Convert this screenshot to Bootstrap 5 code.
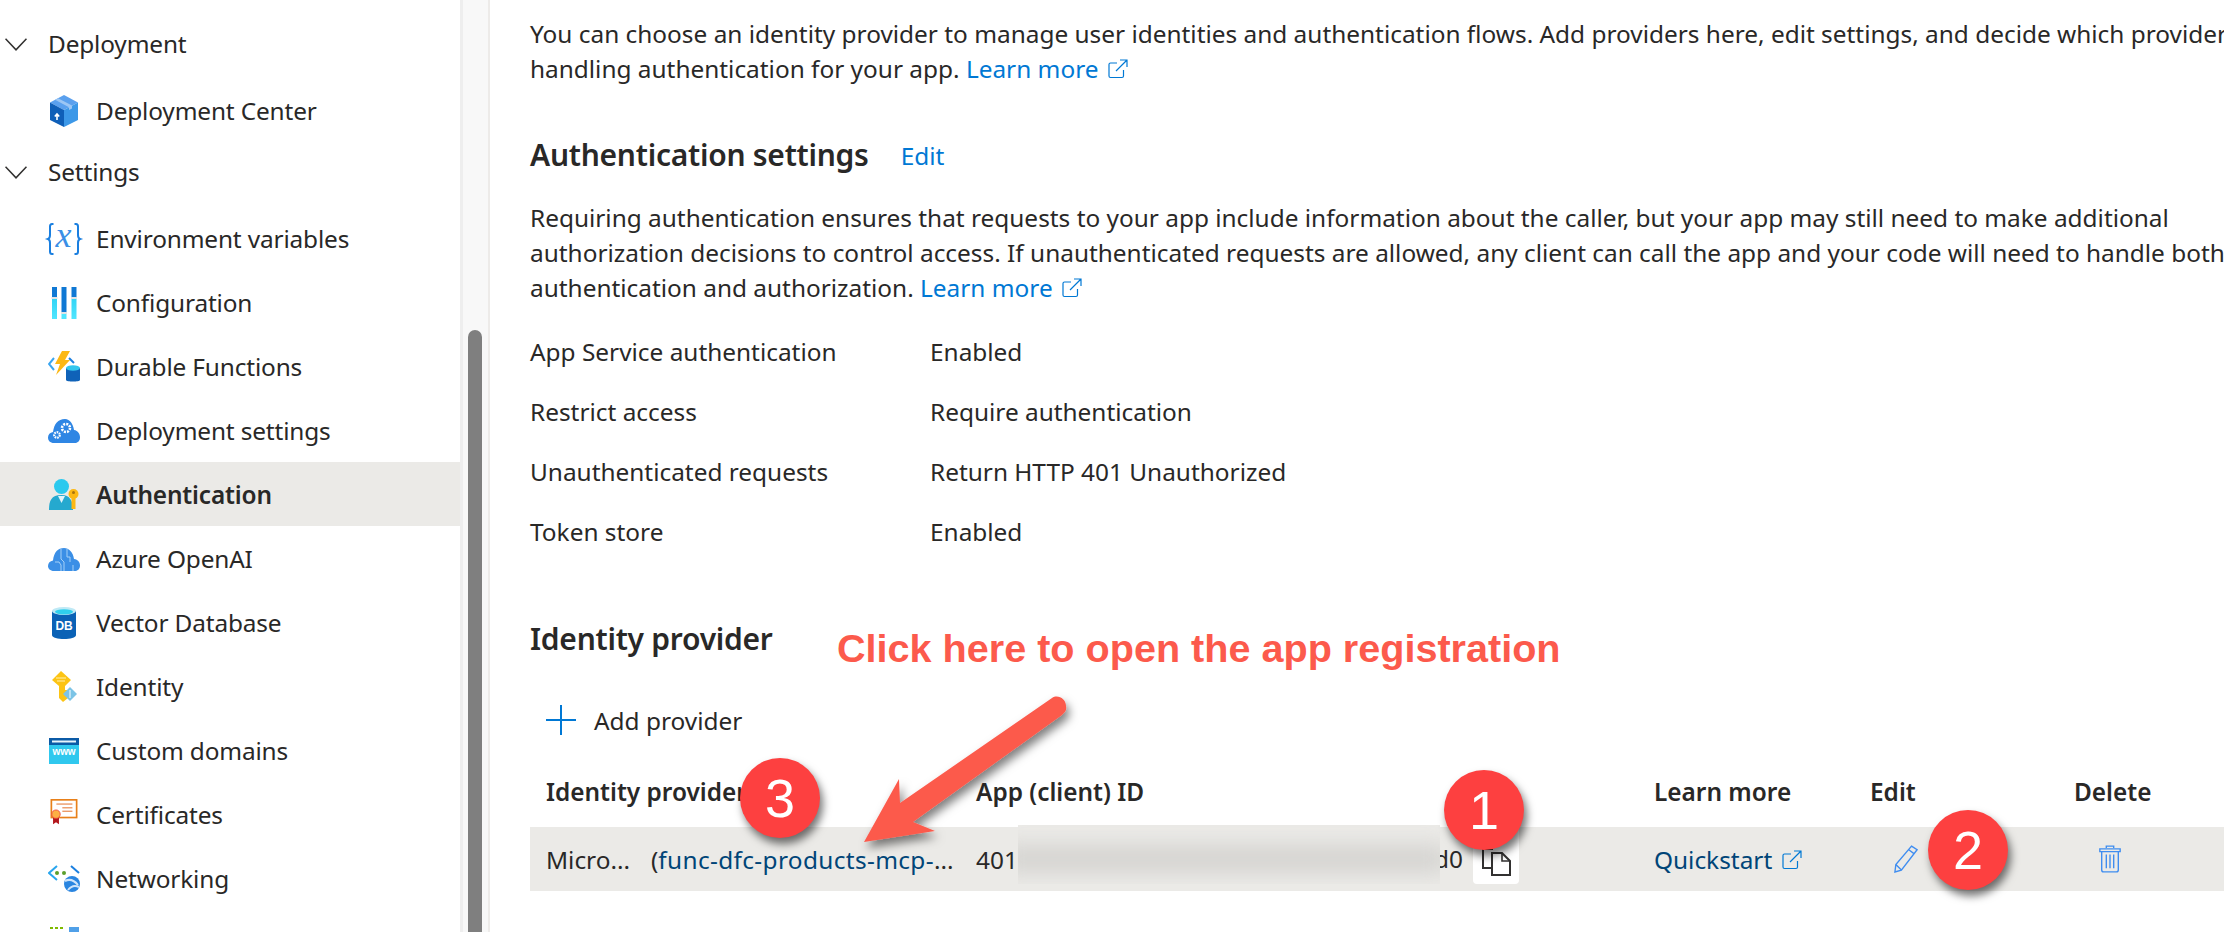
<!DOCTYPE html>
<html lang="en"><head><meta charset="utf-8"><title>Authentication</title>
<link href="https://cdn.jsdelivr.net/npm/bootstrap@5.3.0/dist/css/bootstrap.min.css" rel="stylesheet">
<style>
html,body{height:932px;overflow:hidden;background:#fff}
body{font-family:"Noto Sans","Liberation Sans",sans-serif;font-size:24.4px;color:#292827;position:relative}
.shell{height:932px}
.side{width:460px;flex:none;padding-top:15px;overflow:hidden;letter-spacing:-.15px}
.grp{height:58px;margin-bottom:6px;gap:21px;padding-left:5px}
.grp svg{width:22px;height:13px;flex:none}
.itm{height:64px;padding-left:48px;gap:16px;color:#292827}
.itm svg{width:32px;height:32px;flex:none}
.itm.on{background:#ebeae7;font-weight:600;margin-top:-1px;margin-bottom:1px;padding-top:2px}
.rail{width:30px;flex:none;background:#f8f8f8;border-left:3px solid #eeeeee;border-right:2px solid #edebe9;padding:330px 6px 0 5px}
.thumbx{height:620px;background:#7f7f7f;border-radius:7px 7px 0 0}
.mainx{padding:16px 0 0 40px;line-height:35px;white-space:nowrap;overflow:hidden;min-width:0}
.mainx a{text-decoration:none;color:#0078d4}
.para{margin:0}
.ext{width:20px;height:20px;vertical-align:-1px;margin-left:3px}
.hd{font-size:30px;font-weight:600;letter-spacing:-.26px;line-height:40px}
.hd1{margin-top:49px;gap:32px;margin-bottom:25px}
.hd1 a{font-weight:400;font-size:24.4px;letter-spacing:0;position:relative;top:1px}
.kv{height:60px;margin:0}
.kv1{margin-top:16px}
.kk{width:400px;flex:none}
.hd2{margin-top:58px}
.addp{height:60px;margin-top:31px;margin-left:16px;gap:18px}
.addp svg{width:30px;height:30px}
.thr{font-weight:600;height:40px;margin-top:21px;padding-left:16px;margin-bottom:16px}
.trw{height:64px;background:#ebeae7;padding-left:16px;position:relative}
.c1{width:430px;flex:none}.c2{width:678px;flex:none}.c3{width:216px;flex:none}.c4{width:204px;flex:none}
.c1 a{color:#004578!important;letter-spacing:.35px}
.nm{display:inline-block;width:105px}
.mainx .dk{color:#004578}
.blurx{position:absolute;left:488px;top:-2px;width:422px;height:59px;background:#ecebe8;overflow:hidden}
.blurx i{display:block;position:absolute;left:-20px;right:-10px;top:22px;height:24px;background:#d0cfcc;filter:blur(12px)}
.copyb{position:absolute;left:943px;top:0;width:46px;height:57px;background:#fff;border-radius:0 0 4px 4px;display:flex;align-items:center;justify-content:center}
.copyb svg{width:29px;height:32px;position:relative;top:4px}
.dval{position:absolute;left:904px;top:14px}
.ico2{display:block;width:24px;height:28px;margin-left:24px}
.ann{position:absolute;font-family:"Liberation Sans",Arial,sans-serif;letter-spacing:0}
.cap{left:837px;top:625px;font-size:39.6px;font-weight:700;color:#fc5a4c;line-height:46px;white-space:nowrap}
.dot{width:80px;height:80px;border-radius:50%;background:#fd4040;color:#fff;font-size:54px;line-height:80px;text-align:center;box-shadow:3px 6px 9px rgba(0,0,0,.55)}
.d1{left:1444px;top:770px}.d2{left:1928px;top:810px}.d3{left:740px;top:758px}
.arw{position:absolute;left:0;top:0;width:2224px;height:932px;pointer-events:none}
</style></head><body>
<div class="d-flex shell">
<nav class="side">
<div class="grp d-flex align-items-center"><svg viewBox="0 0 22 13"><path d="M.5.7 11 11.8 21.5.7" fill="none" stroke="#323130" stroke-width="1.6"/></svg><span>Deployment</span></div>
<div class="itm d-flex align-items-center"><svg viewBox="0 0 32 32"><path d="M16 0 30 7.5 16 15 2 7.5Z" fill="#5aa0ee"/><path d="M2 7.5 16 15V32L2 25Z" fill="#0f5fb8"/><path d="M30 7.5 16 15V32L30 25Z" fill="#3c98e8"/><path d="M7 4.8 21 12.2V15L24 13.5V10.6L10 3.2Z" fill="#9cc6f4"/><path d="M9 25V19.5M6.8 21.5 9 19 11.2 21.5" stroke="#fff" stroke-width="1.6" fill="none"/></svg><span>Deployment Center</span></div>
<div class="grp d-flex align-items-center"><svg viewBox="0 0 22 13"><path d="M.5.7 11 11.8 21.5.7" fill="none" stroke="#323130" stroke-width="1.6"/></svg><span>Settings</span></div>
<div class="itm d-flex align-items-center"><svg viewBox="0 0 32 32" overflow="visible"><path d="M5.5 1H4C2.5 1 2 2 2 3.500V12C2 14 1.500 15.500 0 16 1.500 16.500 2 18 2 20V28.500C2 30 2.500 31 4 31H5.500M26.500 1H28C29.500 1 30 2 30 3.500V12C30 14 30.500 15.500 32 16 30.500 16.500 30 18 30 20V28.500C30 30 29.500 31 28 31H26.500" fill="none" stroke="#1a7fe0" stroke-width="2"/><text x="15.500" y="24" text-anchor="middle" font-family="Liberation Serif,serif" font-style="italic" font-size="36" fill="#3a8fe6">x</text></svg><span>Environment variables</span></div>
<div class="itm d-flex align-items-center"><svg viewBox="0 0 32 32"><defs><linearGradient id="g1" x1="0" y1="0" x2="0" y2="1"><stop offset=".3" stop-color="#0f78d4"/><stop offset=".35" stop-color="#32d4f5"/><stop offset="1" stop-color="#50e6ff"/></linearGradient><linearGradient id="g2" x1="0" y1="0" x2="0" y2="1"><stop offset=".78" stop-color="#0f78d4"/><stop offset=".8" stop-color="#50e6ff"/></linearGradient></defs><rect x="4" y="0" width="5" height="32" fill="url(#g1)"/><rect x="13.500" y="0" width="5" height="32" fill="url(#g2)"/><rect x="23.500" y="0" width="5" height="32" fill="url(#g1)"/><rect x="3.500" y="10" width="6" height="2" fill="#dfe3e6"/><rect x="23" y="10" width="6" height="2" fill="#dfe3e6"/><rect x="13" y="25" width="6" height="2" fill="#dfe3e6"/></svg><span>Configuration</span></div>
<div class="itm d-flex align-items-center"><svg viewBox="0 0 32 32"><path d="M6 7 1 13 6 19" fill="none" stroke="#3aa5f0" stroke-width="2"/><path d="M21 7 26 12" fill="none" stroke="#1a7fe0" stroke-width="2"/><path d="M14 0H22L17 9H22L8 24 12 13H7Z" fill="#fcb814"/><path d="M18 17V29C18 31 32 31 32 29V17Z" fill="#0f62b8"/><ellipse cx="25" cy="17" rx="7" ry="2.800" fill="#32c6ee"/></svg><span>Durable Functions</span></div>
<div class="itm d-flex align-items-center"><svg viewBox="0 0 32 32"><path d="M6 28C2 28 0 25.500 0 22.500 0 19.500 2 17.500 5 17 6 9 10 4 17 4 22 4 25 9 26 15 30 15.500 32 19 32 22.500 32 25.500 30 28 27 28Z" fill="#2f86e4"/><circle cx="9" cy="20" r="2.800" fill="none" stroke="#fff" stroke-width="2.200" stroke-dasharray="1.600 .9"/><circle cx="18" cy="13" r="4" fill="none" stroke="#fff" stroke-width="2.600" stroke-dasharray="2 1.100"/></svg><span>Deployment settings</span></div>
<div class="itm on d-flex align-items-center"><svg viewBox="0 0 32 32"><circle cx="13.500" cy="7.500" r="7.500" fill="#2bc9ee"/><path d="M1 31C1 22 3 16 13.500 16 22 16 25 22 25 31Z" fill="#25a9cf"/><path d="M10 17H17L13.500 24Z" fill="#e3f4fa"/><circle cx="25.500" cy="15" r="5" fill="#fcb814"/><rect x="23.500" y="16" width="4" height="14" fill="#fcb814"/><circle cx="25.500" cy="13.500" r="1.500" fill="#a9740e"/></svg><span>Authentication</span></div>
<div class="itm d-flex align-items-center"><svg viewBox="0 0 32 32"><path d="M6 28C2 28 0 25.500 0 23 0 20 2 18 5 17.500 6 9 10 5 16 5 21 5 25 9 26 16 30 16.500 32 19.500 32 22.500 32 25.500 30 28 27 28Z" fill="#3b8fe6"/><path d="M13 6V16L16 19V28M19 6V14H22V19M7 19H11L13 22V28M25 22V28" fill="none" stroke="#a5d0f7" stroke-width="1"/></svg><span>Azure OpenAI</span></div>
<div class="itm d-flex align-items-center"><svg viewBox="0 0 32 32"><path d="M4 4V28C4 33.300 28 33.300 28 28V4Z" fill="#0b62b6"/><ellipse cx="16" cy="4" rx="12" ry="4" fill="#bfe9f5"/><ellipse cx="16" cy="4.800" rx="9" ry="2.600" fill="#2fd0ee"/><text x="16" y="22.500" text-anchor="middle" font-family="Liberation Sans,sans-serif" font-weight="700" font-size="12" fill="#fff">DB</text></svg><span>Vector Database</span></div>
<div class="itm d-flex align-items-center"><svg viewBox="0 0 32 32"><path d="M13 0 23 9 17 15V19H20V22H17V24H20V27L15 31 11 27V15L4 9Z" fill="#fcc414"/><path d="M8 7H18M9 10H17" stroke="#fff0b0" stroke-width="1.200"/><path d="M22 16 29 23 22 30 15 23Z" fill="#7cc4e6"/><path d="M22 19V27" stroke="#fff" stroke-width="1"/></svg><span>Identity</span></div>
<div class="itm d-flex align-items-center"><svg viewBox="0 0 32 32"><rect x="1" y="3" width="30" height="7" fill="#0b5aa6"/><rect x="1" y="10" width="30" height="19" fill="#30c8ee"/><rect x="4" y="5.500" width="24" height="2" fill="#e8f4fb"/><text x="16" y="20" text-anchor="middle" font-family="Liberation Sans,sans-serif" font-size="10" font-weight="700" fill="#fff">www</text></svg><span>Custom domains</span></div>
<div class="itm d-flex align-items-center"><svg viewBox="0 0 32 38" preserveAspectRatio="xMidYMin meet"><rect x="1" y="1" width="30" height="21" fill="#fff" stroke="#e8801a" stroke-width="2"/><path d="M7 6H26M14 10.500H26M14 14.500H26" stroke="#e0661a" stroke-width="1.100"/><path d="M3 22H10V30L6.500 27.500 3 30Z" fill="#b3161c"/><circle cx="6.500" cy="18" r="5" fill="#fcb044" stroke="#f0443c" stroke-width="1"/></svg><span>Certificates</span></div>
<div class="itm d-flex align-items-center"><svg viewBox="0 0 32 32"><path d="M9 3 1 10 9 17" fill="none" stroke="#29a6ee" stroke-width="2"/><path d="M23 3 31 10" fill="none" stroke="#1a7fe0" stroke-width="2"/><circle cx="9" cy="10" r="2" fill="#5c9f2c"/><circle cx="16" cy="10" r="2" fill="#5c9f2c"/><circle cx="24" cy="21" r="8" fill="#2a85e0"/><path d="M17 18C21 16 26 17 30 22M20 27C23 23 27 22 31 24" stroke="#cfe4fa" stroke-width="2" fill="none"/></svg><span>Networking</span></div>
<div class="itm d-flex align-items-center"><svg viewBox="0 0 32 32"><path d="M2 0H16" stroke="#7fba00" stroke-width="4" stroke-dasharray="3 2"/><rect x="21" y="0" width="10" height="5" fill="#50a0e8"/></svg></div>
</nav>
<div class="rail"><div class="thumbx"></div></div>
<main class="mainx flex-grow-1">
<p class="para">You can choose an identity provider to manage user identities and authentication flows. Add providers here, edit settings, and decide which providers<br>handling authentication for your app. <a href="#">Learn more <svg class="ext" viewBox="0 0 20 20"><path d="M9 4H2.500C1.500 4 1 4.500 1 5.500V17C1 18 1.500 18.500 2.500 18.500H14C15 18.500 15.500 18 15.500 17V11M8 12 18.500 1.500M12 1H19V8" fill="none" stroke="#0078d4" stroke-width="1.200"/></svg></a></p>
<div class="hd hd1 d-flex align-items-center"><span>Authentication settings</span><a href="#">Edit</a></div>
<p class="para">Requiring authentication ensures that requests to your app include information about the caller, but your app may still need to make additional<br>authorization decisions to control access. If unauthenticated requests are allowed, any client can call the app and your code will need to handle both<br>authentication and authorization. <a href="#">Learn more <svg class="ext" viewBox="0 0 20 20"><path d="M9 4H2.500C1.500 4 1 4.500 1 5.500V17C1 18 1.500 18.500 2.500 18.500H14C15 18.500 15.500 18 15.500 17V11M8 12 18.500 1.500M12 1H19V8" fill="none" stroke="#0078d4" stroke-width="1.200"/></svg></a></p>
<div class="kv kv1 d-flex align-items-center"><span class="kk">App Service authentication</span><span>Enabled</span></div>
<div class="kv d-flex align-items-center"><span class="kk">Restrict access</span><span>Require authentication</span></div>
<div class="kv d-flex align-items-center"><span class="kk">Unauthenticated requests</span><span>Return HTTP 401 Unauthorized</span></div>
<div class="kv d-flex align-items-center"><span class="kk">Token store</span><span>Enabled</span></div>
<div class="hd hd2">Identity provider</div>
<div class="addp d-flex align-items-center"><svg viewBox="0 0 30 30"><path d="M15 0V30M0 15H30" stroke="#0078d4" stroke-width="2"/></svg><span>Add provider</span></div>
<div class="thr d-flex align-items-center"><span class="c1">Identity provider</span><span class="c2">App (client) ID</span><span class="c3">Learn more</span><span class="c4">Edit</span><span>Delete</span></div>
<div class="trw d-flex align-items-center"><span class="c1"><span class="nm">Micro...</span>(<a href="#">func-dfc-products-mcp-</a>...</span><span class="c2">401</span><span class="c3"><a href="#" class="dk">Quickstart <svg class="ext" viewBox="0 0 20 20"><path d="M9 4H2.500C1.500 4 1 4.500 1 5.500V17C1 18 1.500 18.500 2.500 18.500H14C15 18.500 15.500 18 15.500 17V11M8 12 18.500 1.500M12 1H19V8" fill="none" stroke="#0078d4" stroke-width="1.200"/></svg></a></span><span class="c4"><svg class="ico2" viewBox="0 0 26 30"><path d="M19 1 25 5 8 27 1 29 2 21ZM16 5 22 9.500M2 21 8 27" fill="none" stroke="#3f8df0" stroke-width="1.500"/></svg></span><span class="c4"><svg class="ico2" viewBox="0 0 26 30"><path d="M9 3V1H17V3M2 4H24V7H2ZM4 7V27C4 28.500 5 29 6 29H20C21 29 22 28.500 22 27V7M9 10V25M13 10V25M17 10V25" fill="none" stroke="#3f8df0" stroke-width="1.500"/></svg></span>
<span class="dval">d0</span><div class="blurx"><i></i></div>
<div class="copyb"><svg viewBox="0 0 29 32"><path d="M9 24H1V5H11" fill="none" stroke="#323130" stroke-width="2"/><path d="M10 9H20L28 17V31H10Z" fill="#fff" stroke="#323130" stroke-width="2"/><path d="M20 9V17H28" fill="none" stroke="#323130" stroke-width="1.600"/></svg></div>
</div>
</main>
</div>
<div class="ann cap">Click here to open the app registration</div>
<svg class="arw" viewBox="0 0 2224 932"><defs><filter id="sh" x="-20%" y="-20%" width="140%" height="140%"><feDropShadow dx="3" dy="6" stdDeviation="5" flood-color="#000" flood-opacity=".5"/></filter></defs><path d="M864 842 899 779 900 803 1052 698C1058 694 1066 699 1066 706 1067 710 1065 712 1062 715L913 822 935 831Z" fill="#fc5a4c" filter="url(#sh)"/></svg>
<div class="ann dot d1">1</div><div class="ann dot d2">2</div><div class="ann dot d3">3</div>
<script src="https://cdn.jsdelivr.net/npm/bootstrap@5.3.0/dist/js/bootstrap.bundle.min.js"></script>
</body></html>
